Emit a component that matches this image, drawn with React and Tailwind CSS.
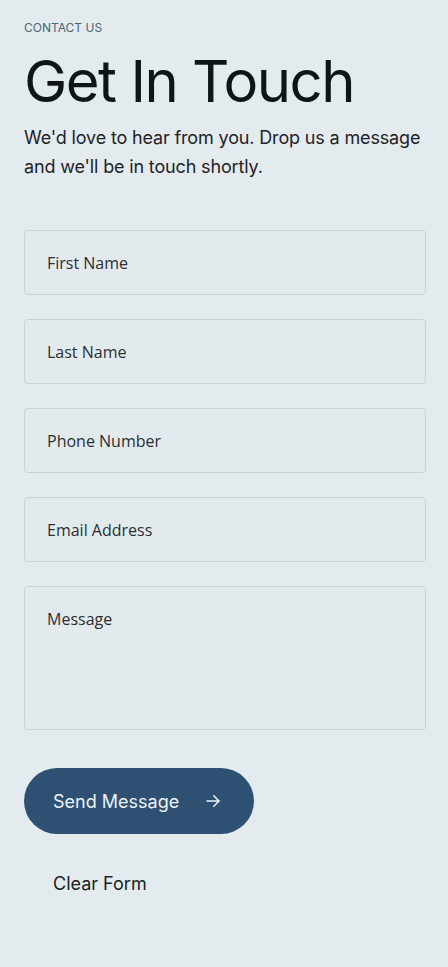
import React from 'react';

function Field({ placeholder, tall }) {
  const base =
    "w-full rounded-[4px] border border-[#c8d2d8] bg-[#e3eaee] px-[22px] font-['Open_Sans',sans-serif] text-[16px] text-[#222] placeholder:text-[#2b2f33] focus:outline-none";
  if (tall) {
    return <textarea placeholder={placeholder} className={`${base} h-[144px] resize-none pt-[20px]`} />;
  }
  return <input type="text" placeholder={placeholder} className={`${base} h-[65px]`} />;
}

export default function App() {
  return (
    <div className="min-h-[967px] bg-[#e3ebef] pl-6 pr-[22px] pt-[19px] font-['Inter',sans-serif]">
      <p className="text-[12px] uppercase text-[#4c6478]">Contact Us</p>
      <h1 className="mt-[12px] text-[58px] font-normal leading-[64px] tracking-[-1.5px] text-[#0f1416]">
        Get In Touch
      </h1>
      <p className="mt-[10px] text-[18px] leading-[29px] tracking-[-0.15px] text-[#1e2326]">
        We'd love to hear from you. Drop us a message and we'll be in touch shortly.
      </p>

      <form className="mt-[49px] flex flex-col gap-[24px]" onSubmit={(e) => e.preventDefault()}>
        <Field placeholder="First Name" />
        <Field placeholder="Last Name" />
        <Field placeholder="Phone Number" />
        <Field placeholder="Email Address" />
        <Field placeholder="Message" tall />

        <div className="mt-[14px] flex flex-col items-start">
          <button
            type="submit"
            className="flex h-[66px] w-[230px] items-center gap-[25px] rounded-full bg-[#2d5073] pl-[29px] text-[18px] text-[#eef3f7]"
          >
            Send Message
            <svg width="18" height="18" viewBox="0 0 24 24" fill="none" stroke="currentColor" strokeWidth="2" strokeLinecap="round" strokeLinejoin="round">
              <path d="M4 12h16" />
              <path d="M13 5l7 7-7 7" />
            </svg>
          </button>
          <button type="reset" className="mt-[36px] pl-[29px] text-[18px] text-[#1b1f22]">
            Clear Form
          </button>
        </div>
      </form>
    </div>
  );
}
